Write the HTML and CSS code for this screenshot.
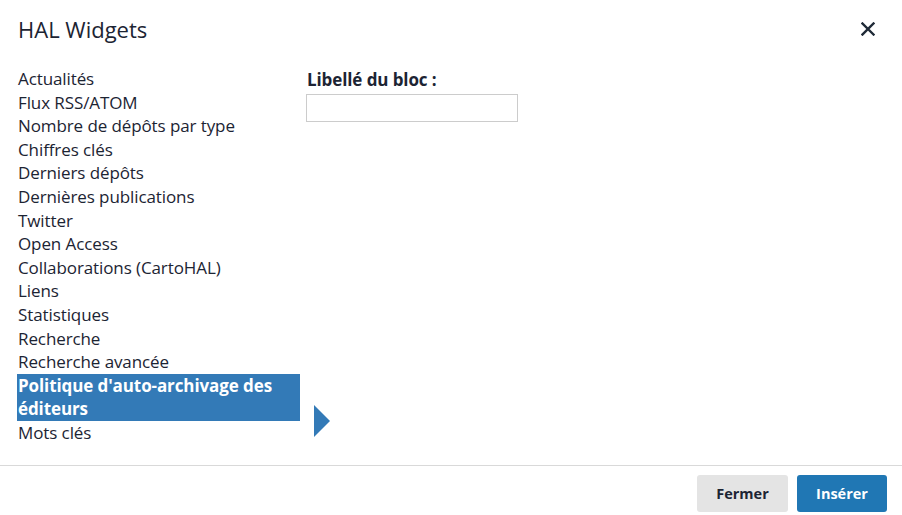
FILE: index.html
```html
<!DOCTYPE html>
<html lang="fr">
<head>
<meta charset="utf-8">
<title>HAL Widgets</title>
<link rel="stylesheet" href="styles.css">
</head>
<body>
<div class="modal">
  <header class="modal-header">
    <h1 class="modal-title">HAL Widgets</h1>
    <button class="close" aria-label="Fermer">
      <svg width="14" height="14" viewBox="0 0 14 14"><path d="M1.5 1.5 L12.5 12.5 M12.5 1.5 L1.5 12.5" stroke="#1f2a37" stroke-width="2.4" stroke-linecap="square"/></svg>
    </button>
  </header>
  <main class="modal-body">
    <div class="list-col">
      <ul class="widget-list">
        <li>Actualités</li>
        <li>Flux RSS/ATOM</li>
        <li>Nombre de dépôts par type</li>
        <li>Chiffres clés</li>
        <li>Derniers dépôts</li>
        <li>Dernières publications</li>
        <li>Twitter</li>
        <li>Open Access</li>
        <li>Collaborations (CartoHAL)</li>
        <li>Liens</li>
        <li>Statistiques</li>
        <li>Recherche</li>
        <li>Recherche avancée</li>
        <li class="selected">Politique d'auto-archivage des éditeurs</li>
        <li>Mots clés</li>
      </ul>
      <div class="arrow-col"><span class="arrow"></span></div>
    </div>
    <div class="form-col">
      <label class="field-label" for="libelle">Libellé du bloc :</label>
      <input id="libelle" class="field-input" type="text">
    </div>
  </main>
  <footer class="modal-footer">
    <button class="btn btn-default">Fermer</button>
    <button class="btn btn-primary">Insérer</button>
  </footer>
</div>
</body>
</html>
```

FILE: styles.css
```css
html, body {
  margin: 0;
  padding: 0;
  background: #fff;
}
body {
  font-family: "Open Sans", "Noto Sans", sans-serif;
  color: #1c2433;
  width: 902px;
  height: 515px;
  overflow: hidden;
}
.modal {
  display: flex;
  flex-direction: column;
  height: 515px;
}
.modal-header {
  display: flex;
  justify-content: space-between;
  align-items: center;
  padding: 11px 27px 3px 18px;
  height: 36px;
}
.modal-title {
  margin: 0;
  font-size: 22px;
  font-weight: 400;
  letter-spacing: 0;
}
.close {
  border: 0;
  background: none;
  padding: 0;
  width: 14px;
  height: 14px;
  display: flex;
  cursor: pointer;
}
.modal-body {
  display: flex;
  align-items: flex-start;
  padding: 17px 0 0 17px;
  flex: 1;
}
.list-col {
  display: flex;
  align-items: flex-end;
}
.widget-list {
  list-style: none;
  margin: 0;
  padding: 0;
  width: 283px;
  font-size: 17px;
  line-height: 23.6px;
  letter-spacing: -0.1px;
}
.widget-list li {
  padding-left: 1px;
}
.widget-list li.selected {
  background: #337ab7;
  color: #fff;
  font-weight: 700;
  padding-right: 8px;
}
.arrow-col {
  width: 6px;
  padding: 0 0 8px 14px;
}
.arrow {
  display: block;
  width: 0;
  height: 0;
  border-top: 16px solid transparent;
  border-bottom: 16px solid transparent;
  border-left: 16px solid #337ab7;
}
.form-col {
  display: flex;
  flex-direction: column;
  margin-left: -14px;
}
.field-label {
  font-weight: 700;
  font-size: 17px;
  line-height: 22px;
  letter-spacing: -0.1px;
  margin: 2px 0 3px 1px;
}
.field-input {
  width: 208px;
  height: 24px;
  border: 1px solid #cccccc;
  padding: 1px;
  margin: 0;
  box-sizing: content-box;
}
.modal-footer {
  border-top: 1px solid #d9d9d9;
  display: flex;
  justify-content: flex-end;
  gap: 9px;
  padding: 9px 15px 3px 0;
}
.btn {
  font-family: inherit;
  font-size: 14.5px;
  font-weight: 700;
  height: 37px;
  border: 0;
  border-radius: 3px;
  cursor: pointer;
}
.btn-default {
  background: #e4e4e4;
  color: #1c2433;
  width: 91px;
}
.btn-primary {
  background: #2077b4;
  color: #fff;
  width: 90px;
}
```
